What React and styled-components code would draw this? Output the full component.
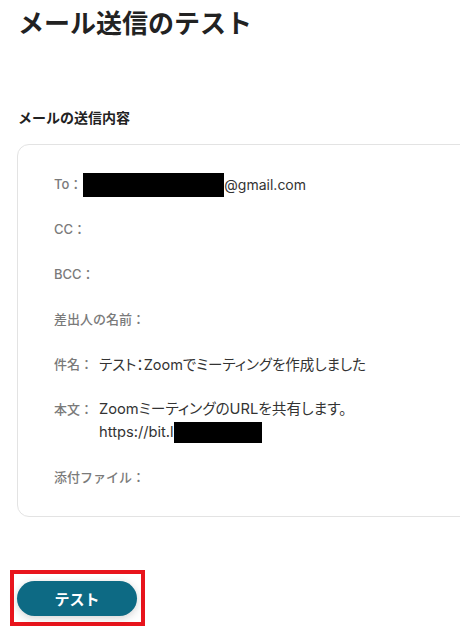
import React from 'react';
import styled, { createGlobalStyle } from 'styled-components';

const GlobalStyle = createGlobalStyle`
  html, body {
    margin: 0;
    padding: 0;
    background: #ffffff;
  }
  body {
    font-family: Inter, "Noto Sans CJK JP", sans-serif;
    color: #333333;
  }
`;

const Page = styled.div`
  width: 460px;
  height: 643px;
  overflow: hidden;
  padding-top: 6px;
  box-sizing: border-box;
`;

const Title = styled.h1`
  margin: 0 0 0 18px;
  font-size: 26px;
  line-height: 36px;
  font-weight: 700;
  color: #222222;
`;

const SectionLabel = styled.h2`
  margin: 66px 0 0 18px;
  font-size: 14px;
  line-height: 20px;
  font-weight: 700;
  color: #222222;
`;

const Card = styled.div`
  width: 480px;
  margin: 16px 0 0 17px;
  border: 1px solid #e3e3e3;
  border-radius: 12px;
  padding: 28px 36px 27px;
  display: flex;
  flex-direction: column;
  gap: 22px;
`;

const Row = styled.div`
  display: flex;
  align-items: flex-start;
  gap: ${(p) => p.$gap ?? 6}px;
  font-size: 13px;
  line-height: 23px;
`;

const Label = styled.span`
  color: #7a7a7a;
  font-weight: 500;
  white-space: nowrap;
`;

const Value = styled.div`
  color: #333333;
  font-size: ${(p) => p.$size ?? 13}px;
  font-feature-settings: "palt";
  display: flex;
  flex-direction: column;
`;

const Line = styled.span`
  display: flex;
  align-items: center;
  height: 23px;
  white-space: nowrap;
`;

const Redacted = styled.span`
  display: inline-block;
  background: #000000;
  width: ${(p) => p.$w}px;
  height: ${(p) => p.$h}px;
`;

const ButtonArea = styled.div`
  margin: 53px 0 0 10px;
  display: inline-block;
  border: 4px solid #e8141c;
  padding: 7px 4px 6px 3px;
`;

const TestButton = styled.button`
  display: block;
  width: 120px;
  height: 35px;
  border: none;
  border-radius: 18px;
  background: #0d6a84;
  color: #ffffff;
  font-family: Inter, "Noto Sans CJK JP", sans-serif;
  font-size: 15px;
  font-weight: 700;
  box-shadow: 0 2px 8px rgba(0, 0, 0, 0.18);
  cursor: pointer;
`;

export default function App() {
  return (
    <>
      <GlobalStyle />
      <Page>
        <Title>メール送信のテスト</Title>
        <SectionLabel>メールの送信内容</SectionLabel>
        <Card>
          <Row $gap={1}>
            <Label>To：</Label>
            <Value $size={14}>
              <Line>
                <Redacted $w={141} $h={24} />
                @gmail.com
              </Line>
            </Value>
          </Row>
          <Row>
            <Label>CC：</Label>
          </Row>
          <Row>
            <Label>BCC：</Label>
          </Row>
          <Row>
            <Label>差出人の名前：</Label>
          </Row>
          <Row>
            <Label>件名：</Label>
            <Value $size={14.5}>
              <Line>テスト：Zoomでミーティングを作成しました</Line>
            </Value>
          </Row>
          <Row>
            <Label>本文：</Label>
            <Value $size={14.7}>
              <Line>ZoomミーティングのURLを共有します。</Line>
              <Line>
                https://bit.l
                <Redacted $w={88} $h={21} />
              </Line>
            </Value>
          </Row>
          <Row>
            <Label>添付ファイル：</Label>
          </Row>
        </Card>
        <ButtonArea>
          <TestButton>テスト</TestButton>
        </ButtonArea>
      </Page>
    </>
  );
}
